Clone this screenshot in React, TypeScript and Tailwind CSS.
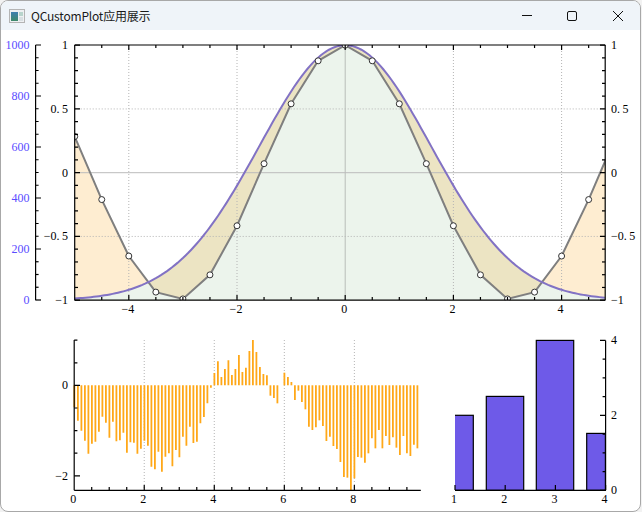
import React from "react";

const FONT = '"Liberation Serif", serif';
const X = (v: number) => 345.2 + v * 54.1;
const Y = (v: number) => 172.7 - v * 127.5;
const range = (a: number, b: number, s: number) => {
  const r: number[] = [];
  for (let v = a; v <= b + 1e-6; v += s) r.push(Math.round(v * 1000) / 1000);
  return r;
};
const fmt = (v: number) => (v < 0 ? "\u2212" + Math.abs(v) : String(v));

const gaussPts = range(-5, 4.8, 0.05).map((x) => [X(x), Y(2 * Math.exp(-(x * x) / 5) - 1)]);
const cosPts = range(-5, 5, 0.5).map((x) => [X(x), Y(Math.cos(x))]);
const toStr = (p: number[][]) => p.map((q) => q[0].toFixed(2) + "," + q[1].toFixed(2)).join(" ");
const gaussLine = toStr(gaussPts);
const cosLine = toStr(cosPts);
const gaussArea = `${gaussLine} 605.2,300.2 74.7,300.2`;
const cosArea = `${cosLine} ${X(5)},300.2 74.7,300.2`;

const T = (p: { x: number; y: number; a?: "start" | "middle" | "end"; c?: string; children: React.ReactNode }) => (
  <text x={p.x} y={p.y} textAnchor={p.a ?? "start"} fill={p.c ?? "#000"} fontFamily={FONT} fontSize={12}>
    {p.children}
  </text>
);
// decimal labels: the reference font gives the point a full digit's width
const Dec = ({ v }: { v: number }) => {
  const s = fmt(v);
  const i = s.indexOf(".");
  if (i < 0) return <>{s}</>;
  return (
    <>
      {s.slice(0, i + 1)}
      <tspan dx={2.5}>{s.slice(i + 1)}</tspan>
    </>
  );
};
const L = (p: { x1: number; y1: number; x2: number; y2: number; w?: number }) => (
  <line x1={p.x1} y1={p.y1} x2={p.x2} y2={p.y2} stroke="#000" strokeWidth={p.w ?? 1.2} />
);

function TopChart() {
  const majorX = [-4, -2, 0, 2, 4];
  const subX = range(-4.5, 4.5, 0.5).filter((v) => !majorX.includes(v));
  const majorY = [-1, -0.5, 0, 0.5, 1];
  const subY = range(-0.9, 0.9, 0.1).filter((v) => !majorY.includes(v));
  return (
    <svg className="block" width={639} height={300} viewBox="1 30 639 300">
      <defs>
        <clipPath id="plot">
          <rect x={74.7} y={45} width={530.5} height={255.2} />
        </clipPath>
        <clipPath id="underCos">
          <polygon points={cosArea} />
        </clipPath>
      </defs>
      <g clipPath="url(#plot)">
        <polygon points={cosArea} fill="#feedd1" />
        <polygon points={gaussArea} fill="#ece4c3" />
        <polygon points={gaussArea} fill="#ecf4ec" clipPath="url(#underCos)" />
      </g>
      {[-4, -2, 2, 4].map((v) => (
        <line key={v} x1={X(v)} y1={45} x2={X(v)} y2={300} stroke="#b4b4b4" strokeDasharray="1 2" />
      ))}
      {[-0.5, 0.5].map((v) => (
        <line key={v} x1={74.7} y1={Y(v)} x2={605} y2={Y(v)} stroke="#b4b4b4" strokeDasharray="1 2" />
      ))}
      <line x1={X(0)} y1={45} x2={X(0)} y2={300} stroke="#b9bdb9" />
      <line x1={74.7} y1={Y(0)} x2={605} y2={Y(0)} stroke="#bcbcbc" />
      <g clipPath="url(#plot)">
        <polyline points={cosLine} fill="none" stroke="#7f7f7f" strokeWidth={2} />
        <polyline points={gaussLine} fill="none" stroke="#8272c4" strokeWidth={2} />
        {cosPts.map((p, i) => (
          <circle key={i} cx={p[0]} cy={p[1]} r={3} fill="#fff" stroke="#333" strokeWidth={1} />
        ))}
      </g>

      <L x1={74.7} y1={45} x2={605.2} y2={45} />
      <L x1={74.7} y1={300.2} x2={605.2} y2={300.2} />
      <L x1={74.7} y1={45} x2={74.7} y2={300.2} />
      <L x1={605.2} y1={45} x2={605.2} y2={300.2} />
      {majorX.map((v) => (
        <g key={v}>
          <L x1={X(v)} y1={45} x2={X(v)} y2={50} />
          <L x1={X(v)} y1={300} x2={X(v)} y2={295} />
          <T x={X(v) - 1} y={313} a="middle">{fmt(v)}</T>
        </g>
      ))}
      {subX.map((v) => (
        <g key={v}>
          <L x1={X(v)} y1={45} x2={X(v)} y2={48} />
          <L x1={X(v)} y1={300} x2={X(v)} y2={297} />
        </g>
      ))}
      {majorY.map((v) => (
        <g key={v}>
          <L x1={74.7} y1={Y(v)} x2={80} y2={Y(v)} />
          <L x1={605.2} y1={Y(v)} x2={600} y2={Y(v)} />
          <T x={68} y={Y(v) + 4} a="end"><Dec v={v} /></T>
          <T x={611} y={Y(v) + 4}><Dec v={v} /></T>
        </g>
      ))}
      {subY.map((v) => (
        <g key={v}>
          <L x1={74.7} y1={Y(v)} x2={78} y2={Y(v)} />
          <L x1={605.2} y1={Y(v)} x2={602} y2={Y(v)} />
        </g>
      ))}

      <L x1={35.6} y1={45} x2={35.6} y2={300.2} />
      {range(0, 1000, 50).map((v) => {
        const y = 300 - v * 0.255;
        const major = v % 200 === 0;
        return (
          <g key={v}>
            <L x1={35.6} y1={y} x2={major ? 41 : 38.6} y2={y} />
            {major && <T x={29.5} y={y + 4} a="end" c="#5a4cff">{v}</T>}
          </g>
        );
      })}
    </svg>
  );
}

// bar end positions, read in 3x crop coordinates
const barEnds = [
  232, 272, 302, 332, 371, 341, 335, 305, 260, 278, 323, 275, 334, 331, 308, 368, 337, 338, 371, 356,
  332, 347, 410, 418, 365, 425, 380, 370, 409, 360, 382, 320, 347, 290, 339, 335, 280, 261, 220, 173,
  129, 94, 141, 117, 91, 135, 117, 75, 126, 113, 63, 30, 66, 111, 132, 136, 197, 204, 220, 166,
  128, 141, 156, 210, 182, 216, 238, 290, 300, 292, 271, 288, 333, 320, 348, 357, 396, 441, 443, 490,
  445, 381, 383, 398, 370, 325, 355, 300, 355, 318, 345, 322, 353, 375, 318, 370, 378, 344, 355,
];

function WaveChart() {
  const px = (v: number) => 74.2 + v * 35.02;
  const py = (v: number) => 385.4 - v * 45.2;
  return (
    <svg className="block" width={440} height={181} viewBox="1 330 440 181">
      {[2, 4, 6, 8].map((v) => (
        <line key={v} x1={px(v)} y1={340} x2={px(v)} y2={490} stroke="#b4b4b4" strokeDasharray="1 2" />
      ))}
      {barEnds.map((e, i) => {
        const y = Math.min(330 + e / 3, 490);
        const x = 74.4 + i * 3.5;
        return <line key={i} x1={x} y1={385.3} x2={x} y2={y} stroke="#ffa818" strokeWidth={1.8} />;
      })}
      <L x1={74.2} y1={340} x2={74.2} y2={490.3} />
      <L x1={74.2} y1={490.3} x2={420.8} y2={490.3} />
      {range(0.5, 9.5, 0.5).map((v) => {
        const major = v % 2 === 0;
        return <L key={v} x1={px(v)} y1={490} x2={px(v)} y2={major ? 485 : 487} />;
      })}
      {[0, 2, 4, 6, 8].map((v) => (
        <T key={v} x={px(v) - 1} y={503} a="middle">{v}</T>
      ))}
      {range(-2, 1, 0.5).map((v) => {
        const major = v === 0 || v === -2;
        return <L key={v} x1={74.2} y1={py(v)} x2={major ? 80 : 77.4} y2={py(v)} />;
      })}
      <T x={68} y={py(0) + 4} a="end">0</T>
      <T x={68} y={py(-2) + 4} a="end">{"\u22122"}</T>
    </svg>
  );
}

function BarChart() {
  const bars = [
    { x: 449, w: 24.3, top: 415.3 },
    { x: 486.3, w: 37.4, top: 396.4 },
    { x: 536.3, w: 37.4, top: 340.4 },
    { x: 586.7, w: 18.7, top: 433.4 },
  ];
  return (
    <svg className="block" width={199} height={181} viewBox="441 330 199 181">
      <defs>
        <clipPath id="barClip">
          <rect x={455} y={330} width={151} height={161} />
        </clipPath>
      </defs>
      <g clipPath="url(#barClip)">
        {bars.map((b) => (
          <rect key={b.x} x={b.x} y={b.top} width={b.w} height={490.3 - b.top} fill="#6e5ae8" stroke="#000" strokeWidth={1.2} />
        ))}
      </g>
      <L x1={455} y1={490.3} x2={605.6} y2={490.3} />
      <L x1={605.6} y1={340.4} x2={605.6} y2={490.3} />
      {[1, 2, 3, 4].map((v) => {
        const x = 455 + (v - 1) * 50.2;
        return (
          <g key={v}>
            <L x1={x} y1={490} x2={x} y2={485} />
            <T x={x - 1} y={503} a="middle">{v}</T>
          </g>
        );
      })}
      {range(0, 4, 0.5).map((v) => {
        const y = 490.3 - v * 37.5;
        const major = v % 2 === 0;
        return <L key={v} x1={605.6} y1={y} x2={major ? 600 : 602.6} y2={y} />;
      })}
      {[0, 2, 4].map((v) => (
        <T key={v} x={611} y={490.3 - v * 37.5 + 4}>{v}</T>
      ))}
    </svg>
  );
}

function AppIcon() {
  return (
    <svg width={16} height={14} viewBox="0 0 16 14" className="block">
      <defs>
        <linearGradient id="ic" x1="0" y1="0" x2="0" y2="1">
          <stop offset="0" stopColor="#3f7fb0" />
          <stop offset="1" stopColor="#3f8a6a" />
        </linearGradient>
      </defs>
      <rect x={0.5} y={0.5} width={15} height={13} fill="#eef0f2" stroke="#b4b4b4" />
      <rect x={2} y={3} width={7} height={9} fill="url(#ic)" />
      <rect x={10} y={3} width={4} height={4} fill="#b8d4cc" />
      <rect x={10} y={8} width={4} height={4} fill="#d8dfe2" />
    </svg>
  );
}

export default function App() {
  return (
    <div className="w-[642px] h-[512px] overflow-hidden bg-[#f2f2f2]">
      <div className="w-[641px] h-[512px] bg-white rounded-lg overflow-hidden border border-[#a8a8a8]">
        <div className="h-[29px] bg-[#eff4f9] flex items-center pl-2 text-[#1a1a1a]">
          <AppIcon />
          <span className="ml-[6px] text-xs tracking-[-0.2px] font-['Noto_Sans_CJK_SC',sans-serif]">QCustomPlot应用展示</span>
          <div className="ml-auto flex items-center">
            <svg width={10} height={10} viewBox="0 0 10 10" className="block mr-[35px]">
              <line x1={0} y1={4.5} x2={10} y2={4.5} stroke="#111" />
            </svg>
            <svg width={10} height={10} viewBox="0 0 10 10" className="block mr-[36px]">
              <rect x={0.5} y={0.5} width={9} height={9} rx={1.5} fill="none" stroke="#111" />
            </svg>
            <svg width={10} height={10} viewBox="0 0 10 10" className="block mr-[17px]">
              <path d="M0 0L10 10M10 0L0 10" stroke="#111" fill="none" />
            </svg>
          </div>
        </div>
        <TopChart />
        <div className="flex">
          <WaveChart />
          <BarChart />
        </div>
      </div>
    </div>
  );
}
